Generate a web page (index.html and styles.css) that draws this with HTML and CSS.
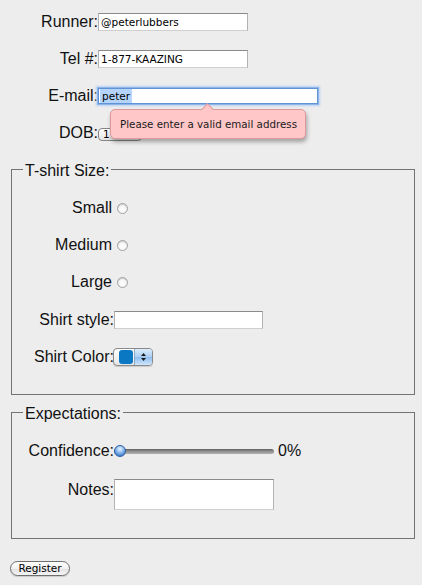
FILE: index.html
```html
<!DOCTYPE html>
<html>
<head>
<meta charset="utf-8">
<title>Registration</title>
<link rel="stylesheet" href="styles.css">
</head>
<body>
<form class="form">
  <div class="row">
    <label class="lbl">Runner:</label>
    <input class="field w150" type="text" value="@peterlubbers">
  </div>
  <div class="row">
    <label class="lbl">Tel #:</label>
    <input class="field w150" type="text" value="1-877-KAAZING">
  </div>
  <div class="row r-email">
    <label class="lbl">E-mail:</label>
    <div class="field email"><span class="sel">peter</span></div>
    <div class="tip">Please enter a valid email address</div>
  </div>
  <div class="row r-dob">
    <label class="lbl">DOB:</label>
    <div class="select">1</div>
  </div>

  <fieldset class="group g-shirt">
    <legend class="legend">T-shirt Size:</legend>
    <div class="frow">
      <label class="rlbl">Small</label>
      <input class="radio" type="radio" name="size">
    </div>
    <div class="frow">
      <label class="rlbl">Medium</label>
      <input class="radio" type="radio" name="size">
    </div>
    <div class="frow r-large">
      <label class="rlbl">Large</label>
      <input class="radio" type="radio" name="size">
    </div>
    <div class="frow">
      <label class="flbl">Shirt style:</label>
      <input class="field w149" type="text">
    </div>
    <div class="frow last">
      <label class="flbl">Shirt Color:</label>
      <div class="colorpick">
        <span class="swatch"></span>
        <span class="arrows">
          <svg width="7" height="12" viewBox="0 0 7 12"><path d="M3.5 2 L6 5 L1 5 Z" fill="#1b1b1b"/><path d="M3.5 10 L6 7 L1 7 Z" fill="#1b1b1b"/></svg>
        </span>
      </div>
    </div>
  </fieldset>

  <fieldset class="group g-exp">
    <legend class="legend">Expectations:</legend>
    <div class="frow r-conf">
      <label class="flbl">Confidence:</label>
      <input class="slider" type="range" min="0" max="100" value="0">
      <span class="pct">0%</span>
    </div>
    <div class="frow r-notes last">
      <label class="flbl">Notes:</label>
      <textarea class="notes"></textarea>
    </div>
  </fieldset>

  <button class="btn" type="button">Register</button>
</form>
</body>
</html>
```

FILE: styles.css
```css
html, body {
  margin: 0;
  padding: 0;
  background: #ededed;
}

body {
  font-family: "Liberation Sans", Arial, sans-serif;
  font-size: 16px;
  color: #111;
}

.form {
  padding: 13px 7px 10px 8px;
}

.row {
  display: flex;
  align-items: center;
  height: 18px;
  margin-bottom: 19px;
}

.lbl {
  width: 90px;
  text-align: right;
  line-height: 18px;
  flex: none;
}

.field {
  box-sizing: border-box;
  height: 18px;
  margin: 0;
  padding: 0 2px;
  font-family: "DejaVu Sans", sans-serif;
  font-size: 10.5px;
  color: #000;
  background: #fff;
  border: 1px solid;
  border-color: #8a8a8a #b2b2b2 #cfcfcf #b2b2b2;
  outline: none;
  flex: none;
}

.w150 { width: 150px; }
.w149 { width: 149px; }

.r-email {
  position: relative;
}

.email {
  width: 220px;
  height: 16px;
  display: flex;
  align-items: center;
  border: 1px solid #5f93d6;
  box-shadow: 0 0 0 1px #8db5ea, 0 0 2px 2px #b7d1f3;
  padding-left: 1px;
}

.sel {
  background: #b4d4fc;
  padding: 1px 2px 1px 2px;
  line-height: 12px;
}

.tip {
  position: absolute;
  left: 102px;
  top: 22px;
  box-sizing: border-box;
  width: 196px;
  height: 30px;
  padding-left: 9px;
  font-family: "DejaVu Sans", sans-serif;
  font-size: 10.3px;
  line-height: 28px;
  color: #1a1a1a;
  background: #ffc7c8;
  border: 1px solid #dc9a9c;
  border-radius: 5px;
  box-shadow: 1px 3px 4px rgba(0, 0, 0, 0.32);
  z-index: 2;
}

.tip::before {
  content: "";
  position: absolute;
  left: 92px;
  top: -5px;
  width: 8px;
  height: 8px;
  background: #ffc7c8;
  border-top: 1px solid #dc9a9c;
  border-left: 1px solid #dc9a9c;
  transform: rotate(45deg);
}

.r-dob {
  margin-bottom: 0;
}

.select {
  box-sizing: border-box;
  width: 44px;
  height: 13px;
  margin-top: 3px;
  padding-left: 4px;
  font-family: "DejaVu Sans", sans-serif;
  font-size: 10.5px;
  line-height: 11px;
  color: #000;
  background: linear-gradient(#ffffff, #e4e4e4);
  border: 1px solid #858585;
  border-radius: 4px;
}

.group {
  margin: 0 0 0 3px;
  padding: 19px 0 28px 0;
  border: 1px solid #737373;
  min-width: 0;
}

.g-shirt {
  margin-top: 17px;
}

.g-exp {
  margin-top: 7px;
}

.legend {
  margin-left: 11px;
  padding: 3px 2px 0;
  font-size: 16px;
}

.frow {
  display: flex;
  align-items: center;
  height: 18px;
  margin-bottom: 19px;
}

.frow.r-large {
  margin-bottom: 20px;
}

.frow.last {
  margin-bottom: 0;
}

.rlbl {
  width: 100px;
  text-align: right;
  line-height: 18px;
  flex: none;
}

.flbl {
  width: 102px;
  text-align: right;
  line-height: 18px;
  flex: none;
}

.radio {
  -webkit-appearance: none;
  appearance: none;
  box-sizing: border-box;
  width: 11px;
  height: 11px;
  margin: 0 0 0 5px;
  border-radius: 50%;
  border: 1px solid #a2a2a2;
  background: radial-gradient(circle at 50% 60%, #ffffff 0, #f4f4f4 55%, #d9d9d9 100%);
  box-shadow: inset 0 1px 1px rgba(0, 0, 0, 0.12);
}

.colorpick {
  box-sizing: border-box;
  display: flex;
  width: 40px;
  height: 18px;
  margin-left: -1px;
  padding: 1px 0 1px 0;
  border: 1px solid #8a8a8a;
  border-radius: 4px;
  background: linear-gradient(#ffffff, #e6e6e6);
  box-shadow: 0 1px 1px rgba(0, 0, 0, 0.15);
}

.swatch {
  width: 14px;
  margin-left: 5px;
  background: #0b78c4;
  border-radius: 3px;
}

.arrows {
  margin-left: auto;
  width: 17px;
  margin-top: -1px;
  margin-bottom: -1px;
  display: flex;
  align-items: center;
  justify-content: center;
  border-left: 1px solid #8da9c8;
  border-radius: 0 3px 3px 0;
  background: linear-gradient(#dcecfc, #a9cdf2 50%, #8dbcee 51%, #cfe6fb);
}

.slider {
  -webkit-appearance: none;
  appearance: none;
  width: 160px;
  height: 18px;
  margin: 0;
  padding: 0;
  background: transparent;
}

.slider::-webkit-slider-runnable-track {
  height: 5px;
  border-radius: 3px;
  background: linear-gradient(#5f5f5f, #8f8f8f 45%, #b4b4b4);
}

.slider::-webkit-slider-thumb {
  -webkit-appearance: none;
  appearance: none;
  box-sizing: border-box;
  width: 12px;
  height: 12px;
  margin-top: -3.5px;
  border-radius: 50%;
  border: 1px solid #2f5f9f;
  background: radial-gradient(circle at 50% 30%, #eef6ff 0, #9cc6f3 35%, #4a86d3 75%, #2d67b5 100%);
}

.pct {
  margin-left: 4px;
  line-height: 18px;
}

.r-notes {
  align-items: flex-start;
  height: 31px;
}

.r-notes .flbl {
  padding-top: 2px;
}

.notes {
  box-sizing: border-box;
  width: 160px;
  height: 31px;
  margin: 0;
  resize: none;
  background: #fff;
  border: 1px solid;
  border-color: #8a8a8a #b2b2b2 #cfcfcf #b2b2b2;
  outline: none;
}

.btn {
  box-sizing: border-box;
  display: block;
  width: 60px;
  height: 15px;
  margin: 22px 0 0 2px;
  padding: 0;
  font-family: "DejaVu Sans", sans-serif;
  font-size: 10.5px;
  line-height: 13px;
  color: #000;
  background: linear-gradient(#ffffff, #f1f1f1 50%, #e2e2e2 51%, #f4f4f4);
  border: 1px solid #6e6e6e;
  border-radius: 8px;
  box-shadow: 0 1px 1px rgba(0, 0, 0, 0.15);
}
```
